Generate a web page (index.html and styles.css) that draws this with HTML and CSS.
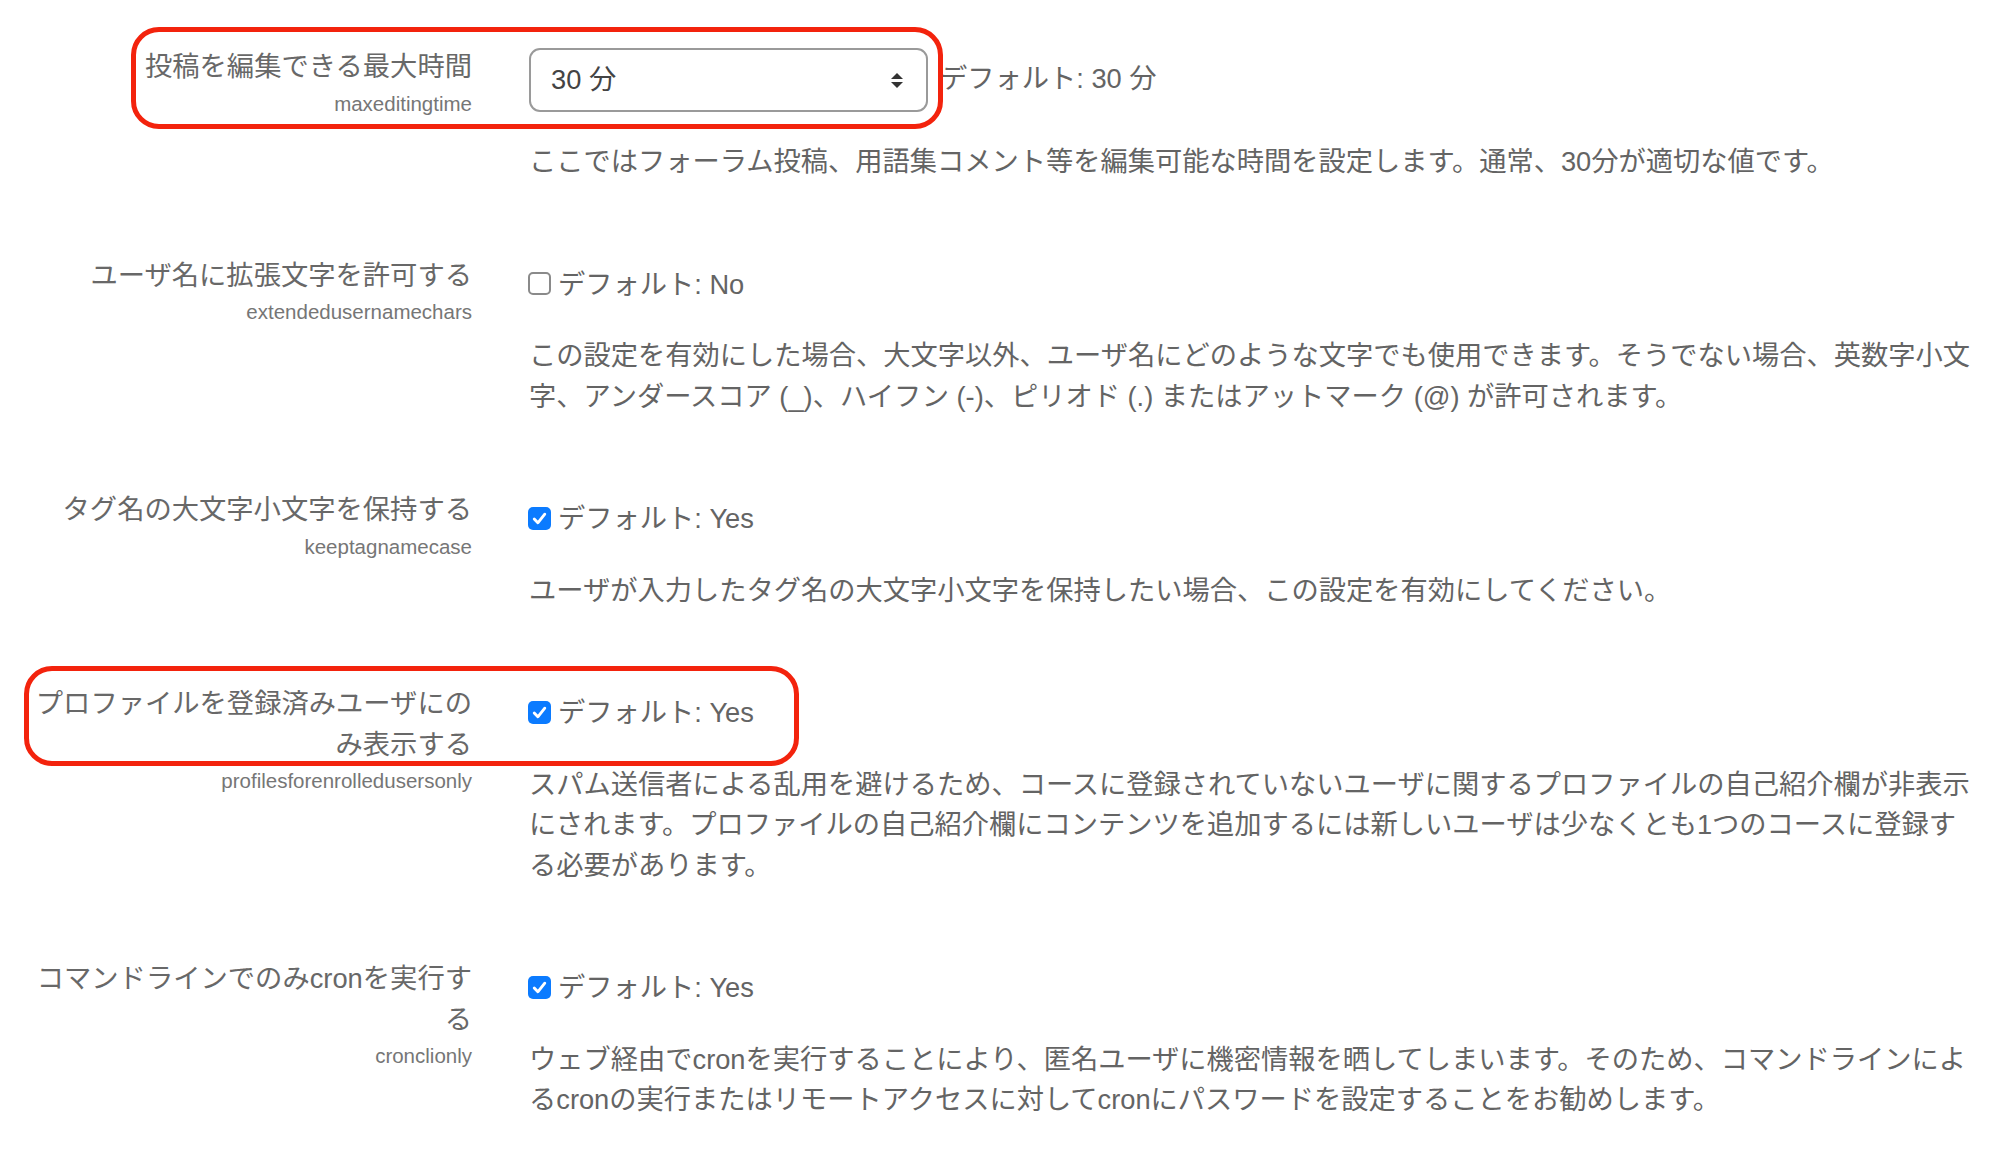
FILE: index.html
```html
<!DOCTYPE html>
<html lang="ja">
<head>
<meta charset="utf-8">
<title>設定</title>
<link rel="stylesheet" href="styles.css">
</head>
<body>
<div class="page">
  <div class="setting">
    <div class="label-col">
      <div class="label">投稿を編集できる最大時間</div>
      <div class="name">maxeditingtime</div>
    </div>
    <div class="form-col">
      <div class="control control-select">
        <div class="select"><span class="select-value">30 分</span>
          <svg class="select-arrow" width="14" height="17" viewBox="0 0 14 17"><polygon points="7,1 13,7 1,7" fill="#333"/><polygon points="1,10 13,10 7,16" fill="#333"/></svg>
        </div>
        <span class="default default-select">デフォルト: 30 分</span>
      </div>
      <div class="desc desc-first">ここではフォーラム投稿、用語集コメント等を編集可能な時間を設定します。通常、30分が適切な値です。</div>
    </div>
  </div>

  <div class="setting">
    <div class="label-col">
      <div class="label">ユーザ名に拡張文字を許可する</div>
      <div class="name">extendedusernamechars</div>
    </div>
    <div class="form-col">
      <div class="control control-check">
        <span class="checkbox"></span>
        <span class="default">デフォルト: No</span>
      </div>
      <div class="desc">この設定を有効にした場合、大文字以外、ユーザ名にどのような文字でも使用できます。そうでない場合、英数字小文字、アンダースコア (_)、ハイフン (-)、ピリオド (.) またはアットマーク (@) が許可されます。</div>
    </div>
  </div>

  <div class="setting">
    <div class="label-col">
      <div class="label">タグ名の大文字小文字を保持する</div>
      <div class="name">keeptagnamecase</div>
    </div>
    <div class="form-col">
      <div class="control control-check">
        <span class="checkbox checked"><svg width="23" height="23" viewBox="0 0 24 24"><path d="M6.5 12.5l3.8 4 7.2-9" fill="none" stroke="#fff" stroke-width="3" stroke-linecap="round" stroke-linejoin="round"/></svg></span>
        <span class="default">デフォルト: Yes</span>
      </div>
      <div class="desc">ユーザが入力したタグ名の大文字小文字を保持したい場合、この設定を有効にしてください。</div>
    </div>
  </div>

  <div class="setting">
    <div class="label-col">
      <div class="label">プロファイルを登録済みユーザにのみ表示する</div>
      <div class="name">profilesforenrolledusersonly</div>
    </div>
    <div class="form-col">
      <div class="control control-check">
        <span class="checkbox checked"><svg width="23" height="23" viewBox="0 0 24 24"><path d="M6.5 12.5l3.8 4 7.2-9" fill="none" stroke="#fff" stroke-width="3" stroke-linecap="round" stroke-linejoin="round"/></svg></span>
        <span class="default">デフォルト: Yes</span>
      </div>
      <div class="desc">スパム送信者による乱用を避けるため、コースに登録されていないユーザに関するプロファイルの自己紹介欄が非表示にされます。プロファイルの自己紹介欄にコンテンツを追加するには新しいユーザは少なくとも1つのコースに登録する必要があります。</div>
    </div>
  </div>

  <div class="setting">
    <div class="label-col">
      <div class="label">コマンドラインでのみcronを実行する</div>
      <div class="name">cronclionly</div>
    </div>
    <div class="form-col">
      <div class="control control-check">
        <span class="checkbox checked"><svg width="23" height="23" viewBox="0 0 24 24"><path d="M6.5 12.5l3.8 4 7.2-9" fill="none" stroke="#fff" stroke-width="3" stroke-linecap="round" stroke-linejoin="round"/></svg></span>
        <span class="default">デフォルト: Yes</span>
      </div>
      <div class="desc">ウェブ経由でcronを実行することにより、匿名ユーザに機密情報を晒してしまいます。そのため、コマンドラインによるcronの実行またはリモートアクセスに対してcronにパスワードを設定することをお勧めします。</div>
    </div>
  </div>

  <div class="highlight highlight-1"></div>
  <div class="highlight highlight-2"></div>
</div>
</body>
</html>
```

FILE: styles.css
```css
html, body {
  margin: 0;
  padding: 0;
  background: #ffffff;
}

body {
  font-family: "Liberation Sans", "Noto Sans CJK JP", sans-serif;
  font-size: 27.25px;
  line-height: 40.5px;
  color: #646464;
}

.page {
  position: relative;
  padding-top: 47px;
  min-height: 1112px;
}

.setting {
  display: grid;
  grid-template-columns: 440px 1450px;
  column-gap: 57px;
  padding-left: 32px;
  margin-bottom: 73px;
  align-items: start;
}

.label-col {
  text-align: right;
}

.label {
  font-size: 27.3px;
  line-height: 40.5px;
  color: #686868;
}

.name {
  font-size: 20.5px;
  line-height: 31px;
  color: #767676;
}

.control {
  display: flex;
  align-items: center;
}

.control-select {
  margin-top: 1px;
}

.select {
  box-sizing: border-box;
  width: 399px;
  height: 64px;
  border: 2px solid #9a9a9a;
  border-radius: 11px;
  display: flex;
  align-items: center;
  justify-content: space-between;
  padding: 0 22px 0 20px;
  color: #444444;
  background: #ffffff;
}

.select-value {
  line-height: 40px;
}

.select-arrow {
  display: block;
  margin-top: 1px;
}

.default-select {
  margin-left: 12px;
  margin-top: -2px;
}

.control-check {
  padding-top: 9px;
  height: 40.5px;
}

.checkbox {
  box-sizing: border-box;
  width: 23px;
  height: 23px;
  border: 2px solid #8a8a8a;
  border-radius: 5px;
  background: #ffffff;
  margin-left: -1px;
  margin-right: 7px;
  flex: none;
  display: flex;
  align-items: center;
  justify-content: center;
  margin-top: -2px;
}

.checkbox.checked {
  border: none;
  background: #0b7bff;
}

.checkbox svg {
  display: block;
}

.desc {
  margin-top: 31px;
  color: #646464;
}

.desc-first {
  margin-top: 30px;
}

.highlight {
  position: absolute;
  box-sizing: border-box;
  border: 5px solid #f3230d;
  border-radius: 28px;
  pointer-events: none;
}

.highlight-1 {
  left: 131px;
  top: 27px;
  width: 812px;
  height: 102px;
}

.highlight-2 {
  left: 24px;
  top: 666px;
  width: 775px;
  height: 100px;
}
```
